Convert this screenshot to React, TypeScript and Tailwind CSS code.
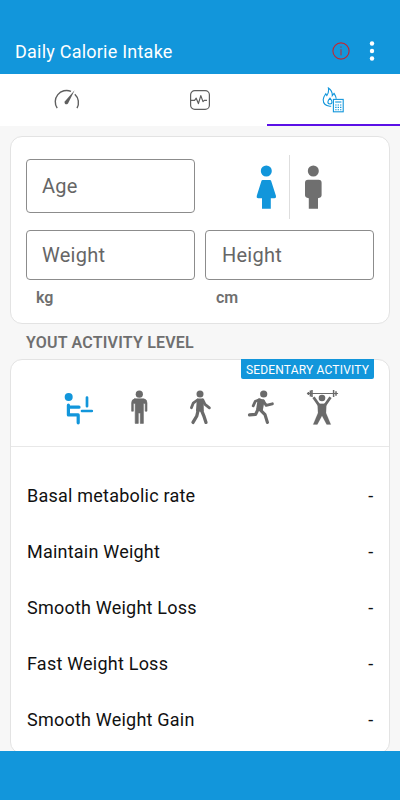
import { useState, ReactNode } from 'react';

interface ActivityType {
  name: string;
  icon: ReactNode;
}

const activities: ActivityType[] = [
  {
    name: 'SEDENTARY ACTIVITY',
    icon: (
      <>
        <circle cx="8.7" cy="6.9" r="4" fill="currentColor" stroke="none" />
        <path d="M8.4 15.2V24.9H18.2V32.8M8.4 17.2H19" strokeWidth="3.2" />
        <path d="M27 7.6V16.2M22 21H31.8" strokeWidth="2.7" />
      </>
    ),
  },
  {
    name: 'LIGHT ACTIVITY',
    icon: (
      <>
        <circle cx="18.3" cy="4.2" r="3.6" fill="currentColor" stroke="none" />
        <path
          d="M13.8 8.8H22.8Q26 9.2 26 13V21.2H24.2V13.4H22.4V33.4H19.3V23H17.3V33.4H14.2V13.4H12.4V21.2H10.6V13Q10.6 9.2 13.8 8.8Z"
          fill="currentColor"
          strokeWidth="0.6"
        />
      </>
    ),
  },
  {
    name: 'MODERATE ACTIVITY',
    icon: (
      <>
        <circle cx="18" cy="4" r="3.5" fill="currentColor" stroke="none" />
        <path d="M15.8 9.6H20.6L20.8 20.5H15Z" fill="currentColor" strokeWidth="2" />
        <path d="M15.4 10L11.2 13.2L9.4 17.8M20.8 10L23 14.4L27.4 17.8" strokeWidth="2.8" />
        <path d="M16.2 20L14.8 26L11 32.4M19.4 20L21.8 25.8L24 32.4" strokeWidth="3.3" />
      </>
    ),
  },
  {
    name: 'HIGH ACTIVITY',
    icon: (
      <>
        <circle cx="20.7" cy="4" r="3.6" fill="currentColor" stroke="none" />
        <path d="M15.6 9.6L20.6 10.6L18.8 20.4L14.2 18.8Z" fill="currentColor" strokeWidth="2" />
        <path d="M16.5 9.8L12.4 11.2L10.2 15.8M20.4 11L23.2 15.4L29.4 13.8" strokeWidth="2.8" />
        <path d="M15 19.4L12.6 24.4L6.5 24.8M17 19.6L22 24.6L24.4 32.4" strokeWidth="3.2" />
      </>
    ),
  },
  {
    name: 'EXTREME ACTIVITY',
    icon: (
      <>
        <path d="M3.3 3.5H33.7" strokeWidth="1" />
        <path d="M4.4 2V5M29.6 0V7M32 1.2V5.8M6.4 .6V6.4M8 0V7" strokeWidth="1.5" strokeLinecap="butt" />
        <circle cx="18" cy="8" r="3.3" fill="currentColor" stroke="none" />
        <path d="M9.5 7.3L14.9 15M26.5 7.3L21.1 15" strokeWidth="2.8" strokeLinecap="butt" />
        <path
          d="M13.6 13L16 13.8H20L22.4 13L22 23L26.8 34.4H22.7L18 25.8L13.3 34.4H9.2L14 23Z"
          fill="currentColor"
          strokeWidth="0.2"
        />
      </>
    ),
  },
];

const results = [
  'Basal metabolic rate',
  'Maintain Weight',
  'Smooth Weight Loss',
  'Fast Weight Loss',
  'Smooth Weight Gain',
];

function Header() {
  return (
    <header className="flex h-[74px] shrink-0 items-end justify-between bg-[#1296db] pr-[25px] pb-[10px] pl-[15px] text-white">
      <h1 className="text-[18px] leading-[25px] tracking-[0.23px]">Daily Calorie Intake</h1>
      <div className="mb-px flex h-[25px] items-center gap-[19px]">
        <button className="text-[#c4262e]">
          <svg width="18" height="18" viewBox="0 0 18 18" fill="none" stroke="currentColor">
            <circle cx="9" cy="9" r="8.1" strokeWidth="1.1" />
            <path d="M9 7.2V13.4M9 4.4V5.7" strokeWidth="1" />
          </svg>
        </button>
        <button>
          <svg width="6" height="20" viewBox="0 0 6 20" fill="currentColor">
            <circle cx="3" cy="2.5" r="2.2" />
            <circle cx="3" cy="10" r="2.2" />
            <circle cx="3" cy="17.5" r="2.2" />
          </svg>
        </button>
      </div>
    </header>
  );
}

function Tabs() {
  return (
    <nav className="grid h-[52px] shrink-0 grid-cols-3 bg-white text-[#5f5f5f]">
      <button className="flex items-center justify-center">
        <svg width="26" height="26" viewBox="0 0 26 26" fill="none" stroke="currentColor" strokeWidth="1.4">
          <path d="M3.2 21.2A11.4 11.4 0 0 1 17 4.3M20.8 7.3A11.4 11.4 0 0 1 23 21.2" />
          <path d="M20.6 3.2L14 16.4Q12.4 18 11 16.8Q10 15.6 11 14.3Z" fill="currentColor" stroke="none" />
        </svg>
      </button>
      <button className="flex items-center justify-center">
        <svg width="22" height="22" viewBox="0 0 22 22" fill="none" stroke="currentColor" strokeWidth="1.2">
          <rect x="1.6" y="1.6" width="18.8" height="18.8" rx="4.2" />
          <path d="M1.6 11.3H5.6L7.2 9.2L9.4 14.6L11.8 6.6L14 12.6L15.3 11.3H18" strokeLinejoin="round" />
        </svg>
      </button>
      <button className="flex flex-col items-center justify-between border-b-[2.5px] border-[#5b10e6] pt-[13px] text-[#1296db]">
        <svg width="24" height="26" viewBox="0 0 24 26" fill="none" stroke="currentColor" strokeWidth="1.1">
          <path d="M10.2 19.2H8.8C4.8 18.8 2.2 16.2 2.2 12.8C2.2 9.8 4 8 4.8 6.8L5.8 8.6C7.8 6.4 7.8 3.8 7.4 1C10.2 2.8 11.4 5 11.3 8.6L13 6.4C14 8 15.2 9.4 15.2 11.8" />
          <path d="M9 11.2C7.6 12.8 6.9 13.6 6.9 15C6.9 17.6 11 17.6 11 15C11 13.6 10.3 12.8 9 11.2Z" />
          <rect x="12.4" y="12.4" width="9.8" height="12.4" />
          <path d="M14.2 15H20.4" />
          <path d="M14.2 18H20.4M14.2 20.4H20.4M14.2 22.8H20.4" strokeDasharray="1.4 1" />
        </svg>
      </button>
    </nav>
  );
}

function Field({ label, className }: { label: string; className: string }) {
  return (
    <input
      placeholder={label}
      className={`rounded-[4px] border border-[#8c8c8c] bg-white px-[15px] text-[20px] tracking-[0.25px] text-[#666] outline-none placeholder:text-[#666] ${className}`}
    />
  );
}

export default function App() {
  const [isFemale, setIsFemale] = useState<boolean>(true);
  const [activity, setActivity] = useState<number>(0);

  return (
    <div className="flex h-[800px] w-[400px] flex-col overflow-hidden bg-[#f7f7f7] font-['Roboto',sans-serif]">
      <Header />
      <Tabs />
      <main className="flex min-h-0 flex-1 flex-col overflow-hidden px-[10px] pt-[10px]">
        <section className="h-[188px] shrink-0 rounded-[12px] border-[1.5px] border-[#e3e3e3] bg-white px-[15px] pt-[22px]">
          <div className="flex">
            <Field label="Age" className="h-[54px] w-[169px]" />
            <div className="-mt-1 ml-[56px] flex h-[64px] items-start">
              <button
                className={isFemale ? 'text-[#1296db]' : 'text-[#6f6f6f]'}
                onClick={() => setIsFemale(true)}>
                <svg className="mt-[10px]" width="30" height="46" viewBox="0 0 30 46" fill="currentColor">
                  <circle cx="15.3" cy="6" r="5.5" />
                  <path d="M11.6 15H19Q19.8 15 20.1 15.8L25 31Q25.4 33.2 23.4 33.2H19.8V43.8H11V33.2H7.2Q5.2 33.2 5.7 31L10.5 15.8Q10.8 15 11.6 15Z" />
                </svg>
              </button>
              <div className="ml-[8px] h-[64px] w-px bg-[#dedede]" />
              <button
                className={isFemale ? 'text-[#6f6f6f]' : 'text-[#1296db]'}
                onClick={() => setIsFemale(false)}>
                <svg className="mt-[10px] ml-[8px]" width="30" height="46" viewBox="0 0 30 46" fill="currentColor">
                  <circle cx="15.3" cy="6" r="5.5" />
                  <path d="M10 14.8H20.6Q23.6 14.8 23.6 17.8V30.2Q23.6 32.6 20 33.2V43.8H10.8V33.2Q7 32.6 7 30.2V17.8Q7 14.8 10 14.8Z" />
                </svg>
              </button>
            </div>
          </div>
          <div className="mt-[11px] flex gap-[10px]">
            <Field label="Weight" className="h-[50px] w-[169px]" />
            <Field label="Height" className="h-[50px] w-[169px] pl-[16px]" />
          </div>
          <div className="mt-[7px] grid grid-cols-[180px_1fr] pl-[10px] text-[16px] leading-[21px] font-semibold text-[#6f6f6f]">
            <span>kg</span>
            <span>cm</span>
          </div>
        </section>

        <h2 className="h-[35px] shrink-0 pt-[8px] pl-[16px] text-[16px] leading-[21px] font-semibold tracking-[0.2px] text-[#6f6f6f]">
          YOUT ACTIVITY LEVEL
        </h2>

        <section className="h-[395px] shrink-0 rounded-[12px] border-[1.5px] border-[#e3e3e3] bg-white">
          <div className="flex h-[87px] flex-col border-b border-[#e8e8e8]">
            <span className="-mt-px mr-[15px] flex h-[20px] w-[133px] items-center justify-center self-end rounded-b-[2px] bg-[#1296db] pt-px text-[12px] tracking-[0.18px] text-white">
              {activities[activity].name}
            </span>
            <div className="mt-[11px] ml-[49px] flex gap-[25px]">
              {activities.map((item, idx) => (
                <button
                  key={item.name}
                  className={idx === activity ? 'text-[#1296db]' : 'text-[#6a6a6a]'}
                  onClick={() => setActivity(idx)}>
                  <svg
                    width="36"
                    height="36"
                    viewBox="0 0 36 36"
                    fill="none"
                    stroke="currentColor"
                    strokeLinecap="round"
                    strokeLinejoin="round">
                    {item.icon}
                  </svg>
                </button>
              ))}
            </div>
          </div>
          <ul className="pt-[20px] pr-[15.5px] pl-[16px] text-[18px] tracking-[0.22px] text-[#111]">
            {results.map((label) => (
              <li key={label} className="flex h-[56px] items-center justify-between">
                <span>{label}</span>
                <span>-</span>
              </li>
            ))}
          </ul>
        </section>
      </main>
      <footer className="h-[49px] shrink-0 bg-[#1296db]" />
    </div>
  );
}
